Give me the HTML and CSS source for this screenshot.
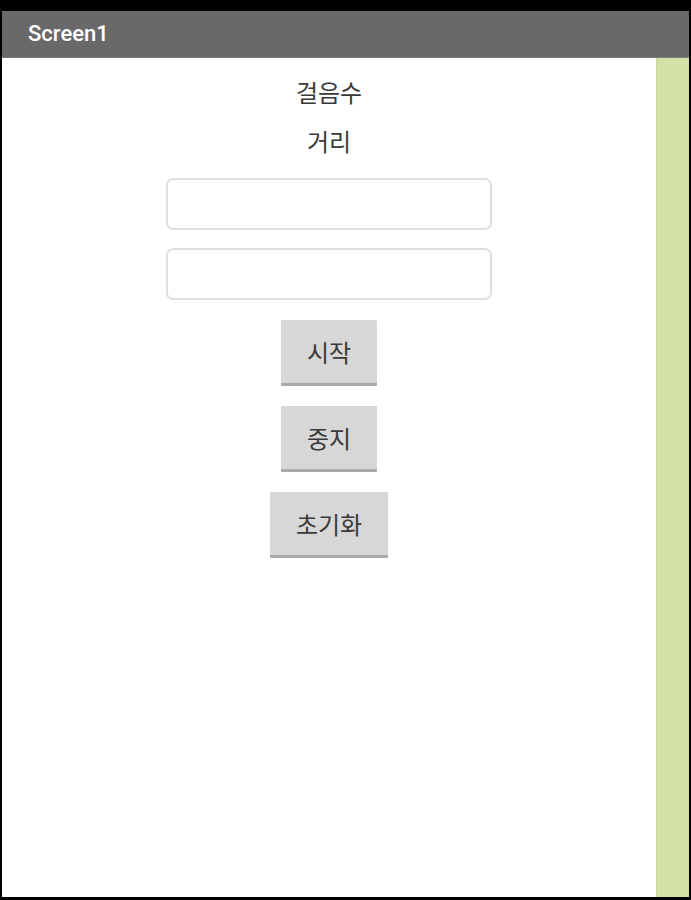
FILE: index.html
```html
<!DOCTYPE html>
<html lang="ko">
<head>
    <meta charset="UTF-8">
    <meta name="viewport" content="width=device-width, initial-scale=1.0">
    <title>Screen1</title>
    <link rel="stylesheet" href="styles.css">
</head>
<body>

    <div class="frame">
        <!-- Title bar -->
        <div class="title-bar">Screen1</div>

        <div class="screen">
            <!-- Main content area -->
            <div class="content">
                <div class="label">걸음수</div>
                <div class="label">거리</div>

                <input class="text-box" type="text">
                <input class="text-box" type="text">

                <button class="app-btn">시작</button>
                <button class="app-btn">중지</button>
                <button class="app-btn">초기화</button>
            </div>

            <!-- Side strip -->
            <div class="side-strip"></div>
        </div>
    </div>

</body>
</html>
```

FILE: styles.css
```css
html, body {
    margin: 0;
    padding: 0;
    height: 100%;
}

body {
    background-color: #000;
    font-family: 'Noto Sans CJK KR', 'Noto Sans', sans-serif;
}

.frame {
    height: 100%;
    box-sizing: border-box;
    padding: 11px 2px 3px 2px;
    display: flex;
    flex-direction: column;
}

/* Title bar */
.title-bar {
    background-color: #696969;
    color: #fff;
    font-family: Roboto, 'Noto Sans', sans-serif;
    font-weight: 500;
    font-size: 22px;
    height: 47px;
    line-height: 45px;
    padding-left: 26px;
    box-sizing: border-box;
    border-bottom: 1px solid #7a7a7a;
}

.screen {
    flex-grow: 1;
    display: flex;
}

/* Main content */
.content {
    flex-grow: 1;
    background-color: #fff;
    display: flex;
    flex-direction: column;
    align-items: center;
    padding-top: 17px;
}

.label {
    font-size: 24px;
    color: #3a3a3a;
    line-height: 34px;
    margin-bottom: 15px;
}

.label + .label {
    margin-bottom: 20px;
}

.text-box {
    width: 326px;
    height: 52px;
    box-sizing: border-box;
    border: 2px solid #e0e0e0;
    border-radius: 7px;
    margin-bottom: 18px;
    background-color: #fff;
    outline: none;
}

/* Buttons */
.app-btn {
    font-family: 'Noto Sans CJK KR', 'Noto Sans', sans-serif;
    font-size: 24px;
    color: #3a3a3a;
    background-color: #d7d7d7;
    border: none;
    border-bottom: 3px solid #a9a9a9;
    border-radius: 1px;
    height: 66px;
    min-width: 93px;
    padding: 0 26px;
    margin-top: 2px;
    margin-bottom: 18px;
    cursor: pointer;
}

/* Right strip */
.side-strip {
    width: 32px;
    background-color: #d3e1a7;
    border-left: 1px solid #c8d79a;
}
```
